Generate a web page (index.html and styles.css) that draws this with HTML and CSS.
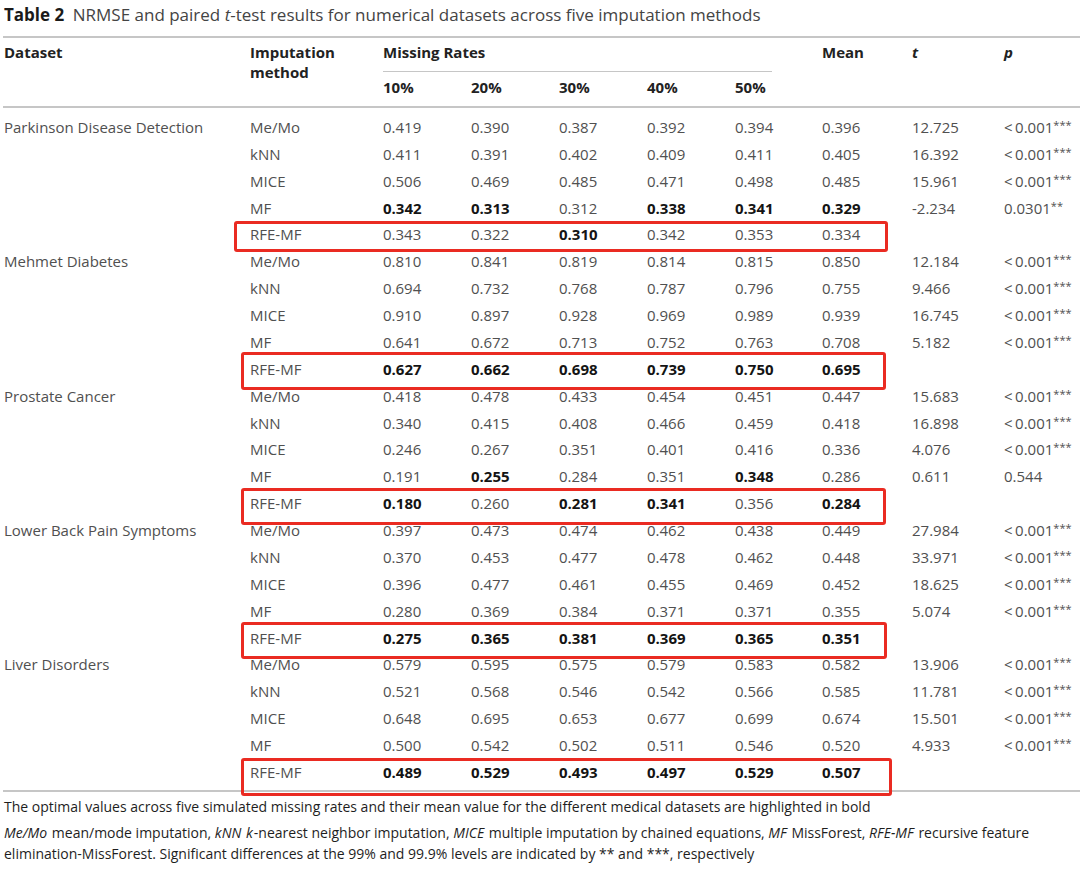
FILE: index.html
```html
<!DOCTYPE html>
<html lang="en">
<head>
<meta charset="utf-8">
<title>Table 2</title>
<link rel="stylesheet" href="styles.css">
</head>
<body>
<div class="page">
  <div class="caption"><b>Table 2</b>&ensp;NRMSE and paired <i>t</i>-test results for numerical datasets across five imputation methods</div>
  <div class="table">
    <div class="thead">
      <div class="h h-dataset">Dataset</div>
      <div class="h h-method">Imputation<br>method</div>
      <div class="h h-missing">Missing Rates</div>
      <div class="h h-mean">Mean</div>
      <div class="h h-t"><i>t</i></div>
      <div class="h h-p"><i>p</i></div>
      <div class="h h-rate r1">10%</div>
      <div class="h h-rate r2">20%</div>
      <div class="h h-rate r3">30%</div>
      <div class="h h-rate r4">40%</div>
      <div class="h h-rate r5">50%</div>
    </div>
    <div class="tbody">
      <div class="row"><span>Parkinson Disease Detection</span><span>Me/Mo</span><span>0.419</span><span>0.390</span><span>0.387</span><span>0.392</span><span>0.394</span><span>0.396</span><span>12.725</span><span>&lt;&#8201;0.001<sup>***</sup></span></div>
      <div class="row"><span></span><span>kNN</span><span>0.411</span><span>0.391</span><span>0.402</span><span>0.409</span><span>0.411</span><span>0.405</span><span>16.392</span><span>&lt;&#8201;0.001<sup>***</sup></span></div>
      <div class="row"><span></span><span>MICE</span><span>0.506</span><span>0.469</span><span>0.485</span><span>0.471</span><span>0.498</span><span>0.485</span><span>15.961</span><span>&lt;&#8201;0.001<sup>***</sup></span></div>
      <div class="row"><span></span><span>MF</span><b>0.342</b><b>0.313</b><span>0.312</span><b>0.338</b><b>0.341</b><b>0.329</b><span>-2.234</span><span>0.0301<sup>**</sup></span></div>
      <div class="row hl hl-1"><span></span><span>RFE-MF</span><span>0.343</span><span>0.322</span><b>0.310</b><span>0.342</span><span>0.353</span><span>0.334</span><span></span><span></span></div>

      <div class="row"><span>Mehmet Diabetes</span><span>Me/Mo</span><span>0.810</span><span>0.841</span><span>0.819</span><span>0.814</span><span>0.815</span><span>0.850</span><span>12.184</span><span>&lt;&#8201;0.001<sup>***</sup></span></div>
      <div class="row"><span></span><span>kNN</span><span>0.694</span><span>0.732</span><span>0.768</span><span>0.787</span><span>0.796</span><span>0.755</span><span>9.466</span><span>&lt;&#8201;0.001<sup>***</sup></span></div>
      <div class="row"><span></span><span>MICE</span><span>0.910</span><span>0.897</span><span>0.928</span><span>0.969</span><span>0.989</span><span>0.939</span><span>16.745</span><span>&lt;&#8201;0.001<sup>***</sup></span></div>
      <div class="row"><span></span><span>MF</span><span>0.641</span><span>0.672</span><span>0.713</span><span>0.752</span><span>0.763</span><span>0.708</span><span>5.182</span><span>&lt;&#8201;0.001<sup>***</sup></span></div>
      <div class="row hl hl-2"><span></span><span>RFE-MF</span><b>0.627</b><b>0.662</b><b>0.698</b><b>0.739</b><b>0.750</b><b>0.695</b><span></span><span></span></div>

      <div class="row"><span>Prostate Cancer</span><span>Me/Mo</span><span>0.418</span><span>0.478</span><span>0.433</span><span>0.454</span><span>0.451</span><span>0.447</span><span>15.683</span><span>&lt;&#8201;0.001<sup>***</sup></span></div>
      <div class="row"><span></span><span>kNN</span><span>0.340</span><span>0.415</span><span>0.408</span><span>0.466</span><span>0.459</span><span>0.418</span><span>16.898</span><span>&lt;&#8201;0.001<sup>***</sup></span></div>
      <div class="row"><span></span><span>MICE</span><span>0.246</span><span>0.267</span><span>0.351</span><span>0.401</span><span>0.416</span><span>0.336</span><span>4.076</span><span>&lt;&#8201;0.001<sup>***</sup></span></div>
      <div class="row"><span></span><span>MF</span><span>0.191</span><b>0.255</b><span>0.284</span><span>0.351</span><b>0.348</b><span>0.286</span><span>0.611</span><span>0.544</span></div>
      <div class="row hl hl-3"><span></span><span>RFE-MF</span><b>0.180</b><span>0.260</span><b>0.281</b><b>0.341</b><span>0.356</span><b>0.284</b><span></span><span></span></div>

      <div class="row"><span>Lower Back Pain Symptoms</span><span>Me/Mo</span><span>0.397</span><span>0.473</span><span>0.474</span><span>0.462</span><span>0.438</span><span>0.449</span><span>27.984</span><span>&lt;&#8201;0.001<sup>***</sup></span></div>
      <div class="row"><span></span><span>kNN</span><span>0.370</span><span>0.453</span><span>0.477</span><span>0.478</span><span>0.462</span><span>0.448</span><span>33.971</span><span>&lt;&#8201;0.001<sup>***</sup></span></div>
      <div class="row"><span></span><span>MICE</span><span>0.396</span><span>0.477</span><span>0.461</span><span>0.455</span><span>0.469</span><span>0.452</span><span>18.625</span><span>&lt;&#8201;0.001<sup>***</sup></span></div>
      <div class="row"><span></span><span>MF</span><span>0.280</span><span>0.369</span><span>0.384</span><span>0.371</span><span>0.371</span><span>0.355</span><span>5.074</span><span>&lt;&#8201;0.001<sup>***</sup></span></div>
      <div class="row hl hl-4"><span></span><span>RFE-MF</span><b>0.275</b><b>0.365</b><b>0.381</b><b>0.369</b><b>0.365</b><b>0.351</b><span></span><span></span></div>

      <div class="row"><span>Liver Disorders</span><span>Me/Mo</span><span>0.579</span><span>0.595</span><span>0.575</span><span>0.579</span><span>0.583</span><span>0.582</span><span>13.906</span><span>&lt;&#8201;0.001<sup>***</sup></span></div>
      <div class="row"><span></span><span>kNN</span><span>0.521</span><span>0.568</span><span>0.546</span><span>0.542</span><span>0.566</span><span>0.585</span><span>11.781</span><span>&lt;&#8201;0.001<sup>***</sup></span></div>
      <div class="row"><span></span><span>MICE</span><span>0.648</span><span>0.695</span><span>0.653</span><span>0.677</span><span>0.699</span><span>0.674</span><span>15.501</span><span>&lt;&#8201;0.001<sup>***</sup></span></div>
      <div class="row"><span></span><span>MF</span><span>0.500</span><span>0.542</span><span>0.502</span><span>0.511</span><span>0.546</span><span>0.520</span><span>4.933</span><span>&lt;&#8201;0.001<sup>***</sup></span></div>
      <div class="row hl hl-5"><span></span><span>RFE-MF</span><b>0.489</b><b>0.529</b><b>0.493</b><b>0.497</b><b>0.529</b><b>0.507</b><span></span><span></span></div>
    </div>
  </div>
  <div class="notes">
    <p class="note1">The optimal values across five simulated missing rates and their mean value for the different medical datasets are highlighted in bold</p>
    <p class="note2"><i>Me/Mo</i> mean/mode imputation, <i>kNN</i> <i>k</i>-nearest neighbor imputation, <i>MICE</i> multiple imputation by chained equations, <i>MF</i> MissForest, <i>RFE-MF</i> recursive feature elimination-MissForest. Significant differences at the 99% and 99.9% levels are indicated by ** and ***, respectively</p>
  </div>
</div>
</body>
</html>
```

FILE: styles.css
```css
* { box-sizing: border-box; }

html, body {
  margin: 0;
  padding: 0;
  background: #ffffff;
}

body {
  font-family: "Open Sans", "Noto Sans", "Liberation Sans", sans-serif;
  color: #505050;
  width: 1080px;
  height: 874px;
  overflow: hidden;
}

.caption {
  height: 36px;
  line-height: 30px;
  padding-left: 4px;
  font-size: 17px;
  color: #444;
}

.caption b {
  color: #1a1a1a;
  font-weight: 700;
}

.table {
  margin-left: 3px;
  border-top: 2px solid #c6c6c6;
  border-bottom: 2px solid #c6c6c6;
}

.thead {
  display: grid;
  grid-template-columns: 247px 133px 88px 88px 88px 88px 87px 90px 92px 1fr;
  grid-template-rows: 34px 34px;
  border-bottom: 2px solid #c6c6c6;
  font-size: 15px;
  font-weight: 700;
  color: #222;
}

.h {
  line-height: 20px;
}

.h-dataset { grid-column: 1; grid-row: 1; padding: 4px 0 0 1px; }
.h-method { grid-column: 2; grid-row: 1 / span 2; padding-top: 4px; }
.h-missing {
  grid-column: 3 / span 5;
  grid-row: 1;
  padding-top: 4px;
  margin-right: 50px;
  border-bottom: 1.5px solid #c6c6c6;
}
.h-mean { grid-column: 8; grid-row: 1; padding-top: 4px; }
.h-t { grid-column: 9; grid-row: 1; padding-top: 4px; }
.h-p { grid-column: 10; grid-row: 1; padding-top: 4px; }
.h-rate { grid-row: 2; padding-top: 5px; }
.r1 { grid-column: 3; }
.r2 { grid-column: 4; }
.r3 { grid-column: 5; }
.r4 { grid-column: 6; }
.r5 { grid-column: 7; }

.tbody {
  padding: 5.5px 0 5px;
}

.row {
  position: relative;
  display: grid;
  grid-template-columns: 247px 133px 88px 88px 88px 88px 87px 90px 92px 1fr;
  height: 26.875px;
  align-items: center;
  font-size: 15px;
  line-height: 20px;
  white-space: nowrap;
}

.row > :first-child { padding-left: 1px; }

.row b {
  font-weight: 700;
  color: #141414;
}

.row sup {
  font-size: 11px;
  line-height: 0;
  vertical-align: 4px;
}

.hl::after {
  content: "";
  position: absolute;
  border: 3px solid #ea2b22;
  border-radius: 3px;
  pointer-events: none;
}

.hl-1::after { left: 231px; width: 648px; top: -0.5px; height: 25px; }
.hl-2::after { left: 238px; width: 639px; top: -3px; height: 32px; }
.hl-3::after { left: 238px; width: 639px; top: -1.5px; height: 31px; }
.hl-4::after { left: 238px; width: 640px; top: -2px; height: 31px; }
.hl-5::after { left: 238px; width: 645px; top: -1px; height: 32px; }

.notes {
  padding-left: 4px;
  font-size: 14px;
  color: #1e1e1e;
}

.notes p { margin: 0; }

.notes i { padding-right: 1px; }

.note1 {
  padding-top: 5px;
  line-height: 20px;
}

.note2 {
  margin-top: 5px !important;
  line-height: 21px;
}
```
